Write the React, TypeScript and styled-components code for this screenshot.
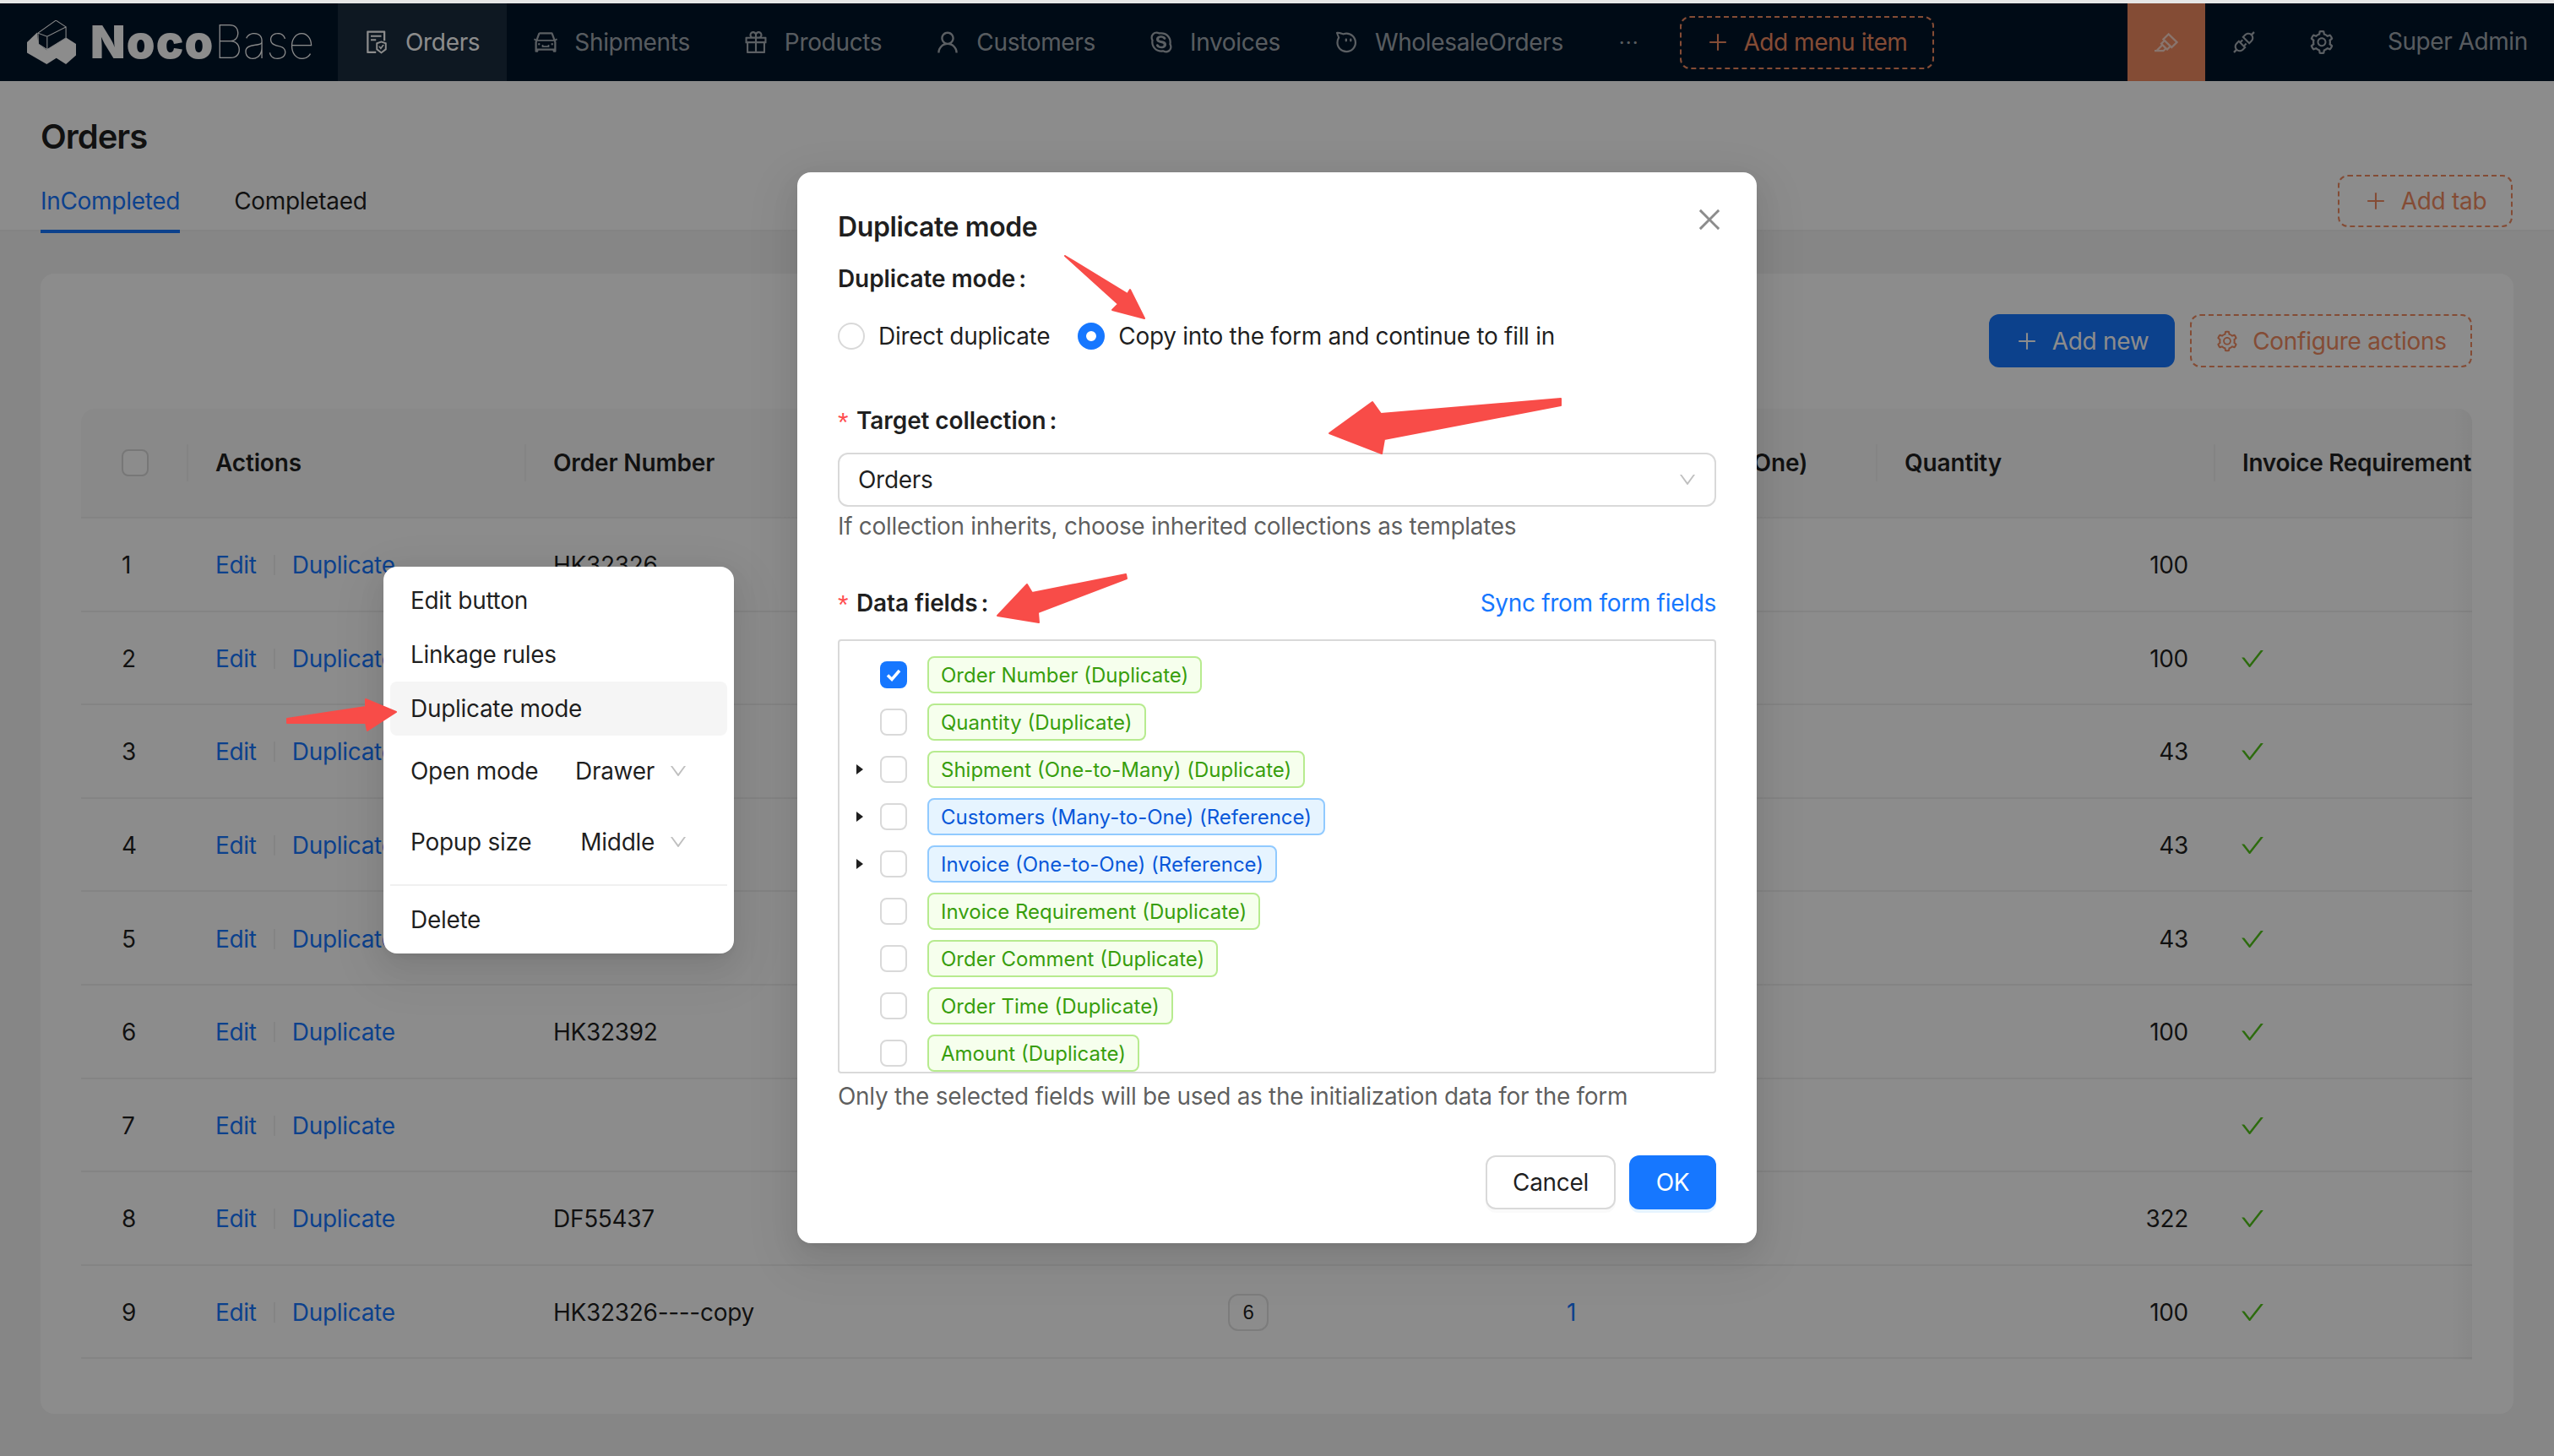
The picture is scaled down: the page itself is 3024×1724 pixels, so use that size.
import React from "react";
import styled, { createGlobalStyle } from "styled-components";
import {
  AiOutlineFileProtect, AiOutlineCar, AiOutlineGift, AiOutlineUser, AiOutlineSkype, AiOutlineAliwangwang,
  AiOutlinePlus, AiOutlineHighlight, AiOutlineApi, AiOutlineSetting, AiOutlineCheck, AiOutlineClose, AiOutlineDown,
} from "react-icons/ai";

const Global = createGlobalStyle`
  html, body { margin: 0; padding: 0; background: #e6e6e6; }
  * { box-sizing: border-box; }
  body { font-family: Inter, "Noto Sans", "Liberation Sans", sans-serif; font-size: 28px; letter-spacing: -.3px; color: rgba(0,0,0,.88); }
`;

const Screen = styled.div`
  position: relative; width: 3024px; height: 1724px; overflow: hidden; padding-top: 4px; background: #f5f5f5;
`;
const TopStrip = styled.div`position: absolute; left: 0; top: 0; width: 100%; height: 4px; background: #e6e6e6; z-index: 5;`;
const Header = styled.header`display: flex; height: 92px; background: #001529; align-items: stretch; color: rgba(255,255,255,.65); letter-spacing: -.33px;`;
const LogoBox = styled.div`width: 400px; display: flex; align-items: center; padding-left: 32px; color: #fff;`;
const LogoMark = styled.svg`width: 58px; height: 52px; margin-right: 17px; flex: none;`;
const LogoBold = styled.span`font-weight: 900; font-size: 54px; letter-spacing: 1.2px; line-height: 1;`;
const LogoThin = styled.span`font-weight: 100; font-size: 54px; letter-spacing: -.5px; line-height: 1;`;
const MenuItem = styled.div<{ $active?: boolean }>`
  display: flex; align-items: center; gap: 18px; padding: 0 32px 0 30px; white-space: nowrap;
  background: ${p => (p.$active ? "rgba(255,255,255,.1)" : "transparent")};
  color: ${p => (p.$active ? "#fff" : "inherit")};
  svg { font-size: 32px; flex: none; }
`;
const MoreDots = styled.div`display: flex; align-items: center; width: 106px; padding-left: 34px; letter-spacing: 1px; font-size: 24px;`;
const DashedButton = styled.div`
  display: flex; align-items: center; justify-content: center; gap: 16px; height: 63px; padding: 0 30px;
  border: 2px dashed rgb(241,139,98); border-radius: 12px; color: rgb(241,139,98); white-space: nowrap;
  svg { font-size: 28px; flex: none; }
`;
const HeaderButton = styled(DashedButton)`align-self: center; width: 301px; letter-spacing: -.45px;`;
const HeaderRight = styled.div`margin-left: auto; display: flex; align-items: stretch;`;
const ToolBlock = styled.div<{ $on?: boolean }>`
  width: 92px; display: flex; align-items: center; justify-content: center; font-size: 32px;
  background: ${p => (p.$on ? "rgb(241,139,98)" : "transparent")};
  color: ${p => (p.$on ? "rgba(255,255,255,.65)" : "inherit")};
`;
const UserName = styled.div`display: flex; align-items: center; width: 229px; padding-left: 32px; margin-top: -2px; letter-spacing: -.45px; white-space: nowrap;`;

const PageHead = styled.section`height: 178px; padding: 40px 48px 0; background: #fff; border-bottom: 2px solid #f0f0f0;`;
const Title = styled.h1`margin: 0; font-size: 40px; line-height: 52px; font-weight: 600; letter-spacing: -1px;`;
const TabsRow = styled.div`display: flex; align-items: flex-end; height: 86px; padding-top: 28px;`;
const Tab = styled.div<{ $on?: boolean }>`
  line-height: 44px; padding-bottom: 12px; margin: 0 64px -2px 0; border-bottom: 4px solid ${p => (p.$on ? "#1677ff" : "transparent")};
  color: ${p => (p.$on ? "#1677ff" : "inherit")};
`;
const AddTab = styled(DashedButton)`margin: 0 1px 5px auto; height: 62px; width: 207px;`;

const Main = styled.main`padding: 50px 48px 0;`;
const Card = styled.div`height: 1350px; padding: 48px 49px 0 48px; background: #fff; border-radius: 16px;`;
const Toolbar = styled.div`display: flex; justify-content: flex-end; gap: 18px; height: 63px; margin-bottom: 49px;`;
const PrimaryAdd = styled.div`
  display: flex; align-items: center; justify-content: center; gap: 16px; width: 220px; background: #1677ff; color: #fff; border-radius: 12px;
  svg { font-size: 28px; }
`;
const ConfigButton = styled(DashedButton)`width: 334px; height: 63px;`;
const Table = styled.div`
  position: relative; overflow: hidden; border-radius: 16px 16px 0 0; height: 1126px;
  &::after {
    content: ""; position: absolute; right: 0; top: 0; bottom: 0; width: 24px;
    background: linear-gradient(to right, rgba(0,0,0,0), rgba(0,0,0,.035));
  }
`;
const gridCols = "125px repeat(6, 400px) 306px";
const HeadRow = styled.div`
  display: grid; grid-template-columns: ${gridCols}; height: 130px; background: #fafafa; border-bottom: 2px solid #f0f0f0;
  align-items: center; font-weight: 600; letter-spacing: -.15px;
`;
const HeadCell = styled.div<{ $sep?: boolean; $tight?: boolean }>`
  position: relative; padding: 0 0 0 34px; white-space: nowrap;
  letter-spacing: ${p => (p.$tight ? "-.3px" : "inherit")};
  &::before {
    content: ""; display: ${p => (p.$sep ? "block" : "none")}; position: absolute; left: 0; top: 50%; width: 2px; height: 44px; margin-top: -22px; background: #f0f0f0;
  }
`;
const HeadCheck = styled.div`width: 32px; height: 32px; margin-left: 48px; border: 2px solid #d9d9d9; border-radius: 8px; background: #fff;`;
const Row = styled.div`
  display: grid; grid-template-columns: ${gridCols}; height: 110.6px; padding-top: 2px; background: #fff; border-bottom: 2px solid #f0f0f0; align-items: center;
`;
const IndexCell = styled.div`padding-left: 48px;`;
const Cell = styled.div<{ $right?: boolean }>`padding: 0 30px 0 34px; white-space: nowrap; text-align: ${p => (p.$right ? "right" : "left")};`;
const ActionCell = styled(Cell)`display: flex; align-items: center; gap: 20px;`;
const Link = styled.span`color: #1677ff;`;
const ActionSep = styled.i`display: block; width: 2px; height: 24px; background: #f0f0f0;`;
const CountBadge = styled.span`
  display: inline-flex; align-items: center; justify-content: center; width: 48px; height: 44px; margin-left: -1px;
  border: 2px solid #e2e2e2; border-radius: 12px; font-family: "Liberation Sans", sans-serif; font-size: 24px;
`;
const GreenCheck = styled(AiOutlineCheck)`display: block; margin-left: -4px; font-size: 32px; color: #52c41a;`;

const Mask = styled.div`position: absolute; left: 0; right: 0; top: 4px; bottom: 0; background: rgba(0,0,0,.45); z-index: 2;`;

const Popup = styled.div`
  position: absolute; left: 454px; top: 671px; width: 415px; height: 458px; padding: 8px; z-index: 3; background: #fff; border-radius: 16px;
  box-shadow: 0 12px 32px rgba(0,0,0,.08), 0 6px 12px -8px rgba(0,0,0,.12), 0 18px 56px 16px rgba(0,0,0,.05);
`;
const PopItem = styled.div<{ $hover?: boolean; $tall?: boolean }>`
  display: flex; align-items: center; justify-content: space-between; height: ${p => (p.$tall ? 84 : 64)}px; padding: 0 46px 0 24px; border-radius: 8px;
  background: ${p => (p.$hover ? "#f5f5f5" : "transparent")}; white-space: nowrap;
`;
const PopValue = styled.span`display: flex; align-items: center; gap: 16px; svg { font-size: 24px; color: rgba(0,0,0,.25); }`;
const PopDivider = styled.div`height: 2px; margin: 8px 0; background: #f0f0f0;`;

const Modal = styled.div`
  position: absolute; left: 944px; top: 204px; width: 1136px; height: 1268px; padding: 40px 48px; z-index: 3; background: #fff; border-radius: 16px;
  box-shadow: 0 12px 32px rgba(0,0,0,.08), 0 6px 12px -8px rgba(0,0,0,.12), 0 18px 56px 16px rgba(0,0,0,.05);
`;
const ModalTitle = styled.h2`margin: 0 0 14px; font-size: 32px; line-height: 50px; font-weight: 600; letter-spacing: -.4px;`;
const CloseIcon = styled(AiOutlineClose)`position: absolute; top: 38px; right: 38px; font-size: 36px; color: rgba(0,0,0,.45);`;
const FieldLabel = styled.div<{ $mb: number }>`
  display: flex; align-items: center; line-height: 44px; font-weight: 600; letter-spacing: -.1px; margin-bottom: ${p => p.$mb}px; white-space: nowrap;
`;
const Star = styled.span`color: #ff4d4f; font-weight: 400; font-size: 32px; line-height: 32px; width: 22px; padding-top: 4px; font-family: "Liberation Sans", sans-serif;`;
const Colon = styled.span`margin-left: 4px;`;
const RadioRow = styled.div`display: flex; align-items: center; height: 44px; margin-bottom: 56px;`;
const RadioDot = styled.span<{ $on?: boolean }>`
  display: block; width: 32px; height: 32px; border-radius: 50%; flex: none; background: #fff; margin-right: 16px;
  border: ${p => (p.$on ? "10px solid #1677ff" : "2px solid #d9d9d9")};
`;
const RadioText = styled.span`margin-right: 33px; white-space: nowrap;`;
const SelectBox = styled.div`
  display: flex; align-items: center; justify-content: space-between; height: 64px; padding: 0 20px 0 22px; border: 2px solid #d9d9d9; border-radius: 12px;
  svg { font-size: 24px; color: rgba(0,0,0,.25); }
`;
const Hint = styled.div<{ $mb: number; $mt: number }>`line-height: 44px; color: rgba(0,0,0,.65); margin-top: ${p => p.$mt}px; margin-bottom: ${p => p.$mb}px; white-space: nowrap;`;
const LabelRow = styled.div`display: flex; justify-content: space-between; align-items: center; margin-bottom: 21px;`;
const Tree = styled.div`height: 514px; overflow: hidden; padding-top: 12px; border: 2px solid #d9d9d9; border-radius: 4px;`;
const TreeRow = styled.div`display: flex; align-items: center; height: 56px;`;
const CaretSlot = styled.div`display: flex; justify-content: center; width: 48px;`;
const Caret = styled.i`display: block; width: 0; height: 0; border-style: solid; border-width: 6.5px 0 6.5px 8px; border-color: transparent transparent transparent #1f1f1f;`;
const Check = styled.span<{ $on?: boolean }>`
  display: flex; align-items: center; justify-content: center; width: 32px; height: 32px; margin-right: 24px; border-radius: 8px; flex: none;
  background: ${p => (p.$on ? "#1677ff" : "#fff")}; border: ${p => (p.$on ? "none" : "2px solid #d9d9d9")};
`;
const CheckTick = styled.svg`width: 20px; height: 20px;`;
const Tag = styled.span<{ $ref?: boolean }>`
  display: inline-flex; align-items: center; height: 44px; padding: 0 14px; border-radius: 8px; font-size: 24px; letter-spacing: 0; white-space: nowrap;
  background: ${p => (p.$ref ? "#e6f4ff" : "#f6ffed")}; border: 2px solid ${p => (p.$ref ? "#91caff" : "#b7eb8f")}; color: ${p => (p.$ref ? "#0958d9" : "#389e0d")};
`;
const Footer = styled.div`display: flex; justify-content: flex-end; gap: 16px;`;
const BtnCancel = styled.div`
  display: flex; align-items: center; justify-content: center; width: 154px; height: 64px; border: 2px solid #d9d9d9; border-radius: 12px; background: #fff;
  box-shadow: 0 4px 0 rgba(0,0,0,.02);
`;
const BtnOk = styled.div`
  display: flex; align-items: center; justify-content: center; width: 103px; height: 64px; border-radius: 12px; background: #1677ff; color: #fff;
  box-shadow: 0 4px 0 rgba(5,145,255,.1);
`;
const Annotations = styled.svg`position: absolute; left: 0; top: 0; width: 3024px; height: 1724px; z-index: 4; pointer-events: none;`;

const menu = [
  { label: "Orders", Icon: AiOutlineFileProtect, active: true },
  { label: "Shipments", Icon: AiOutlineCar },
  { label: "Products", Icon: AiOutlineGift },
  { label: "Customers", Icon: AiOutlineUser },
  { label: "Invoices", Icon: AiOutlineSkype },
  { label: "WholesaleOrders", Icon: AiOutlineAliwangwang },
];

const rows: { order?: string; qty?: string; ok?: boolean; badge?: string; link?: string }[] = [
  { order: "HK32326", qty: "100" },
  { qty: "100", ok: true },
  { qty: "43", ok: true },
  { qty: "43", ok: true },
  { qty: "43", ok: true },
  { order: "HK32392", qty: "100", ok: true },
  { ok: true },
  { order: "DF55437", qty: "322", ok: true },
  { order: "HK32326----copy", qty: "100", ok: true, badge: "6", link: "1" },
];

const fields: { label: string; ref?: boolean; caret?: boolean; on?: boolean }[] = [
  { label: "Order Number (Duplicate)", on: true },
  { label: "Quantity (Duplicate)" },
  { label: "Shipment (One-to-Many) (Duplicate)", caret: true },
  { label: "Customers (Many-to-One) (Reference)", caret: true, ref: true },
  { label: "Invoice (One-to-One) (Reference)", caret: true, ref: true },
  { label: "Invoice Requirement (Duplicate)" },
  { label: "Order Comment (Duplicate)" },
  { label: "Order Time (Duplicate)" },
  { label: "Amount (Duplicate)" },
];

export default function App() {
  return (
    <Screen>
      <Global />
      <TopStrip />
      <Header>
        <LogoBox>
          <LogoMark viewBox="32 25 56 50">
            <path fill="currentColor" d="M32 50 L43.5 39 L45 52 L54.5 59 L77 45 L88 52 L88 65 L76.5 75 L65.5 68 L54.5 75 L32 62 Z" />
            <path fill="none" stroke="currentColor" strokeWidth="1" d="M44.5 39.5 L65 25 L76.5 32.5 L55 43.5 Z M44.5 39.5 L45 52 L55 58.5 L55 43.5 M76.5 32.5 L76.5 45 L55 58.5" />
          </LogoMark>
          <LogoBold>Noco</LogoBold>
          <LogoThin>Base</LogoThin>
        </LogoBox>
        {menu.map(({ label, Icon, active }) => (
          <MenuItem key={label} $active={active}>
            <Icon />
            {label}
          </MenuItem>
        ))}
        <MoreDots>···</MoreDots>
        <HeaderButton><AiOutlinePlus />Add menu item</HeaderButton>
        <HeaderRight>
          <ToolBlock $on><AiOutlineHighlight /></ToolBlock>
          <ToolBlock><AiOutlineApi /></ToolBlock>
          <ToolBlock><AiOutlineSetting /></ToolBlock>
          <UserName>Super Admin</UserName>
        </HeaderRight>
      </Header>

      <PageHead>
        <Title>Orders</Title>
        <TabsRow>
          <Tab $on>InCompleted</Tab>
          <Tab>Completaed</Tab>
          <AddTab><AiOutlinePlus />Add tab</AddTab>
        </TabsRow>
      </PageHead>

      <Main>
        <Card>
          <Toolbar>
            <PrimaryAdd><AiOutlinePlus />Add new</PrimaryAdd>
            <ConfigButton><AiOutlineSetting />Configure actions</ConfigButton>
          </Toolbar>
          <Table>
            <HeadRow>
              <HeadCheck />
              <HeadCell $sep>Actions</HeadCell>
              <HeadCell $sep>Order Number</HeadCell>
              <HeadCell />
              <HeadCell />
              <HeadCell>Invoice (One-to-One)</HeadCell>
              <HeadCell $sep>Quantity</HeadCell>
              <HeadCell $sep $tight>Invoice Requirement</HeadCell>
            </HeadRow>
            {rows.map((r, i) => (
              <Row key={i}>
                <IndexCell>{i + 1}</IndexCell>
                <ActionCell><Link>Edit</Link><ActionSep /><Link>Duplicate</Link></ActionCell>
                <Cell>{r.order}</Cell>
                <Cell />
                <Cell>{r.badge && <CountBadge>{r.badge}</CountBadge>}</Cell>
                <Cell>{r.link && <Link>{r.link}</Link>}</Cell>
                <Cell $right>{r.qty}</Cell>
                <Cell>{r.ok && <GreenCheck />}</Cell>
              </Row>
            ))}
          </Table>
        </Card>
      </Main>

      <Mask />

      <Popup>
        <PopItem>Edit button</PopItem>
        <PopItem>Linkage rules</PopItem>
        <PopItem $hover>Duplicate mode</PopItem>
        <PopItem $tall>Open mode<PopValue>Drawer<AiOutlineDown /></PopValue></PopItem>
        <PopItem $tall>Popup size<PopValue>Middle<AiOutlineDown /></PopValue></PopItem>
        <PopDivider />
        <PopItem>Delete</PopItem>
      </Popup>

      <Modal>
        <ModalTitle>Duplicate mode</ModalTitle>
        <CloseIcon />
        <FieldLabel $mb={24}>Duplicate mode<Colon>:</Colon></FieldLabel>
        <RadioRow>
          <RadioDot /><RadioText>Direct duplicate</RadioText>
          <RadioDot $on /><RadioText>Copy into the form and continue to fill in</RadioText>
        </RadioRow>
        <FieldLabel $mb={16}><Star>*</Star>Target collection<Colon>:</Colon></FieldLabel>
        <SelectBox>Orders<AiOutlineDown /></SelectBox>
        <Hint $mt={1} $mb={47}>If collection inherits, choose inherited collections as templates</Hint>
        <LabelRow>
          <FieldLabel $mb={0}><Star>*</Star>Data fields<Colon>:</Colon></FieldLabel>
          <Link>Sync from form fields</Link>
        </LabelRow>
        <Tree>
          {fields.map(f => (
            <TreeRow key={f.label}>
              <CaretSlot>{f.caret && <Caret />}</CaretSlot>
              <Check $on={f.on}>
                {f.on && (
                  <CheckTick viewBox="0 0 20 20"><path d="M3 10.5 L8 15.5 L17 5" fill="none" stroke="#fff" strokeWidth="3.5" /></CheckTick>
                )}
              </Check>
              <Tag $ref={f.ref}>{f.label}</Tag>
            </TreeRow>
          ))}
        </Tree>
        <Hint $mt={5} $mb={48}>Only the selected fields will be used as the initialization data for the form</Hint>
        <Footer>
          <BtnCancel>Cancel</BtnCancel>
          <BtnOk>OK</BtnOk>
        </Footer>
      </Modal>

      <Annotations viewBox="0 0 3024 1724">
        <g fill="#f84c48" stroke="#f84c48" strokeWidth="2" strokeLinejoin="round">
          <polygon points="340,851 433,837 433,828 469,843 435,865 433,856 340,856" />
          <polygon points="1261,303 1335,348 1338,343 1355,377 1317,367 1324,360" />
          <polygon points="1848,472 1848,480 1639,520 1636,537 1574,513 1625,476 1635,490" />
          <polygon points="1333,680 1334,685 1229,725 1230,737 1181,729 1216,692 1222,702" />
        </g>
      </Annotations>
    </Screen>
  );
}
